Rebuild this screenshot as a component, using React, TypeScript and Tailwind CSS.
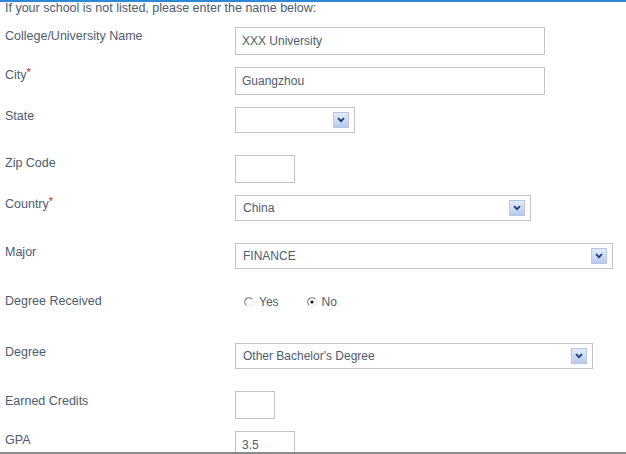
import React from "react";

const FONT = { fontFamily: '"Liberation Sans", Arial, sans-serif' };

function Arrow() {
  return (
    <div className="w-[16px] h-[16px] border border-[#b8c7e6] bg-gradient-to-b from-[#e3ebfa] to-[#b9caec] flex items-center justify-center shrink-0">
      <svg width="8" height="6" viewBox="0 0 8 6">
        <path d="M1 1.2 L4 4.2 L7 1.2" fill="none" stroke="#1e3b82" strokeWidth="1.8" />
      </svg>
    </div>
  );
}

function TextBox({ w, value }: { w: string; value?: string }) {
  return (
    <div className={`${w} h-[28px] border border-[#c4c4c4] bg-white flex items-center pl-[6px] text-[12px] text-[#4e5b70]`}>
      {value}
    </div>
  );
}

function SelectBox({ w, value }: { w: string; value?: string }) {
  return (
    <div className={`${w} h-[26px] border border-[#c4c4c4] bg-white flex items-center justify-between pl-[7px] pr-[5px] text-[12px] text-[#4e5b70]`}>
      <span>{value}</span>
      <Arrow />
    </div>
  );
}

function Radio({ checked }: { checked?: boolean }) {
  return (
    <svg width="10" height="10" viewBox="0 0 10 10" className="shrink-0">
      <circle cx="5" cy="5" r="4" fill="white" />
      <path d="M8 2 A4 4 0 1 0 2 8" fill="none" stroke="#7a7a7a" strokeWidth="1.1" />
      <path d="M2 8 A4 4 0 0 0 8 2" fill="none" stroke="#e6e6e6" strokeWidth="1.1" />
      {checked && <circle cx="5" cy="5" r="1.6" fill="#111" />}
    </svg>
  );
}

function Row({ label, req, cls, shift, children }: { label: string; req?: boolean; cls: string; shift: string; children: React.ReactNode }) {
  return (
    <div className={`flex items-center ${cls}`}>
      <div className={`w-[235px] pl-[5px] text-[12.5px] leading-[14px] text-[#4e5b70] ${shift}`}>
        {label}
        {req && <span className="text-[#cc2222] text-[11px] leading-[8px] align-top">*</span>}
      </div>
      {children}
    </div>
  );
}

export default function App() {
  return (
    <div className="w-[626px] h-[454px] bg-white flex flex-col overflow-hidden" style={FONT}>
      <div className="h-[2px] bg-[#3087d4] shrink-0" />
      <div className="flex-1 overflow-hidden flex flex-col">
        <div className="h-[13px] leading-[13px] pl-[5px] text-[12.5px] text-[#4e5b70]">
          If your school is not listed, please enter the name below:
        </div>
        <Row label="College/University Name" cls="mt-[12px]" shift="pb-[10px]">
          <TextBox w="w-[310px]" value="XXX University" />
        </Row>
        <Row label="City" req cls="mt-[12px]" shift="pb-[12px]">
          <TextBox w="w-[310px]" value="Guangzhou" />
        </Row>
        <Row label="State" cls="mt-[12px]" shift="pb-[8px]">
          <SelectBox w="w-[120px]" />
        </Row>
        <Row label="Zip Code" cls="mt-[22px]" shift="pb-[12px]">
          <TextBox w="w-[60px]" />
        </Row>
        <Row label="Country" req cls="mt-[12px]" shift="pb-[8px]">
          <SelectBox w="w-[296px]" value="China" />
        </Row>
        <Row label="Major" cls="mt-[22px]" shift="pb-[8px]">
          <SelectBox w="w-[378px]" value="FINANCE" />
        </Row>
        <Row label="Degree Received" cls="mt-[24px] h-[20px]" shift="pb-[2px]">
          <div className="flex items-center text-[12px] text-[#4e5b70] pl-[9px]">
            <Radio />
            <span className="ml-[5px]">Yes</span>
            <span className="ml-[28px] flex"><Radio checked /></span>
            <span className="ml-[5px]">No</span>
          </div>
        </Row>
        <Row label="Degree" cls="mt-[32px]" shift="pb-[8px]">
          <SelectBox w="w-[358px]" value="Other Bachelor's Degree" />
        </Row>
        <Row label="Earned Credits" cls="mt-[22px]" shift="pb-[8px]">
          <TextBox w="w-[40px]" />
        </Row>
        <Row label="GPA" cls="mt-[12px]" shift="pb-[10px]">
          <TextBox w="w-[60px]" value="3.5" />
        </Row>
      </div>
      <div className="h-[2px] bg-[#8a8a8a] shrink-0" />
    </div>
  );
}
